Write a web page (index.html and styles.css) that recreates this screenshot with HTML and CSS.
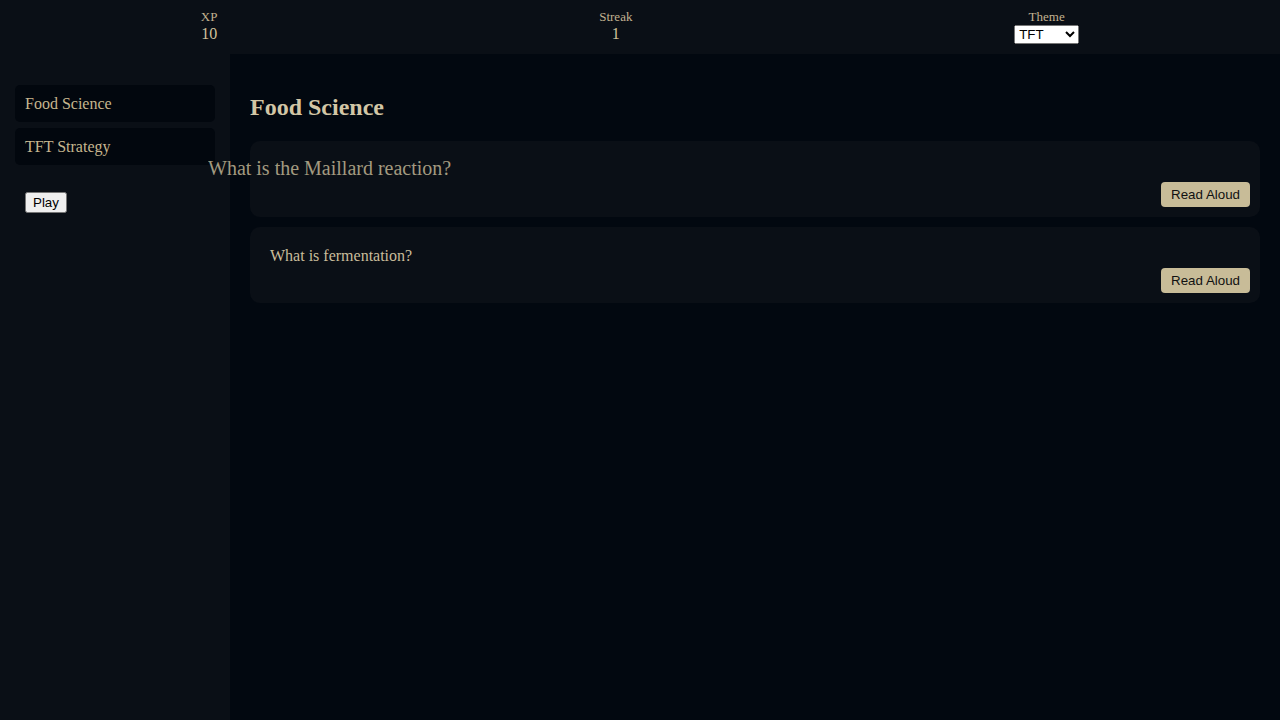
FILE: index.html
```html
<!DOCTYPE html>
<html>
<head>
<meta charset="utf-8">
<link rel="stylesheet" href="styles.css">
</head>
<body>
<header class="topbar">
  <div class="stat"><div class="stat-label">XP</div><div class="stat-value">10</div></div>
  <div class="stat"><div class="stat-label">Streak</div><div class="stat-value">1</div></div>
  <div class="stat"><div class="stat-label">Theme</div>
    <select class="theme-select"><option>TFT</option><option>Food</option></select>
  </div>
</header>
<div class="layout">
  <aside class="sidebar">
    <ul class="deck-list">
      <li class="deck-item">Food Science</li>
      <li class="deck-item">TFT Strategy</li>
    </ul>
    <div class="controls"><button class="play-btn">Play</button></div>
  </aside>
  <main class="main">
    <h2 class="deck-title">Food Science</h2>
    <div class="card">
      <div class="question"><span class="question-active">What is the Maillard reaction?</span></div>
      <div class="card-actions"><button class="read-btn">Read Aloud</button></div>
    </div>
    <div class="card">
      <div class="question">What is fermentation?</div>
      <div class="card-actions"><button class="read-btn">Read Aloud</button></div>
    </div>
  </main>
</div>
</body>
</html>
```
FILE: styles.css
```css
html, body {
  margin: 0;
  padding: 0;
  height: 100%;
}
body {
  background: #020810;
  color: #c9bb94;
  font-family: "Liberation Serif", "Times New Roman", serif;
  font-size: 16px;
  display: flex;
  flex-direction: column;
  overflow: hidden;
}
.topbar {
  display: flex;
  justify-content: space-around;
  padding: 10px;
  background: #0a0f16;
  text-align: center;
}
.stat-label {
  font-size: 13px;
  line-height: 14px;
  color: #c2b290;
}
.stat-value {
  font-size: 16px;
  line-height: 20px;
  color: #d0c29c;
}
.theme-select {
  font-family: "Liberation Sans", Arial, sans-serif;
  font-size: 13.33px;
  height: 19px;
  width: 65px;
  display: block;
  margin-top: 1px;
}
.layout {
  flex: 1;
  display: flex;
}
.sidebar {
  width: 200px;
  padding: 15px;
  background: #0a0f16;
}
.deck-list {
  list-style: none;
  margin: 16px 0;
  padding: 0;
}
.deck-item {
  background: #02070e;
  border-radius: 5px;
  padding: 10px;
  line-height: 17px;
  margin-bottom: 6px;
  color: #c6b68e;
}
.controls {
  padding: 11px 10px;
}
.play-btn {
  font-family: "Liberation Sans", Arial, sans-serif;
  font-size: 13.33px;
}
.main {
  flex: 1;
  padding: 20px;
}
.deck-title {
  font-size: 24px;
  margin: 20px 0;
  line-height: 27px;
  color: #d2c6a6;
}
.card {
  background: #0a0f16;
  border-radius: 10px;
  padding: 20px 10px 10px 20px;
  margin-bottom: 10px;
}
.question {
  line-height: 18px;
  color: #c9bd9b;
}
.question-active {
  display: inline-block;
  transform: translate(-62px, -1px) scale(1.25);
  transform-origin: left center;
  opacity: 0.8;
}
.card-actions {
  display: flex;
  justify-content: flex-end;
  margin-top: 3px;
}
.read-btn {
  font-family: "Liberation Sans", Arial, sans-serif;
  font-size: 13.33px;
  line-height: 16px;
  height: 25px;
  padding: 4px 10px;
  border: none;
  border-radius: 4px;
  background: #c8bc98;
  color: #111;
}
```
